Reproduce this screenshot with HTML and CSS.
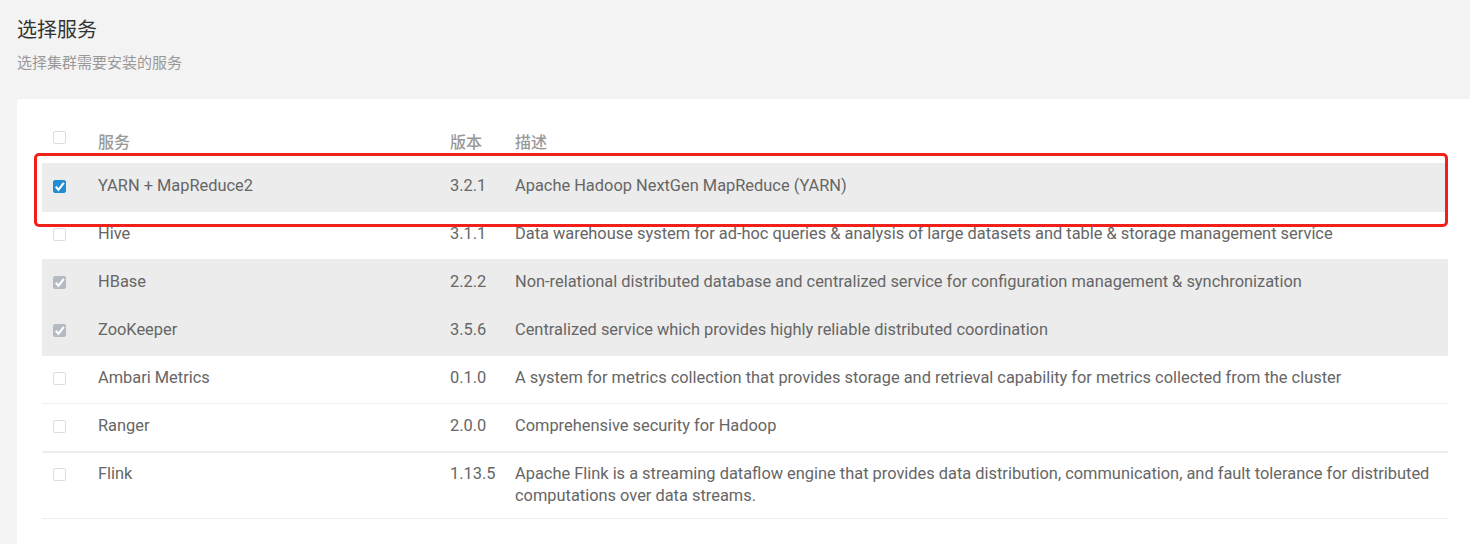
FILE: index.html
```html
<!DOCTYPE html>
<html lang="zh">
<head>
<meta charset="utf-8">
<link rel="stylesheet" href="styles.css">
</head>
<body>
<div class="page">
  <h1 class="title">选择服务</h1>
  <p class="subtitle">选择集群需要安装的服务</p>
  <div class="card">
    <table class="svc">
      <thead>
        <tr>
          <th class="c-check"><span class="cb"></span></th>
          <th class="c-name">服务</th>
          <th class="c-ver">版本</th>
          <th class="c-desc">描述</th>
        </tr>
      </thead>
      <tbody>
        <tr class="sel">
          <td class="c-check"><span class="cb on"><svg viewBox="0 0 13 13"><path d="M2.8 6.6 L5.4 9.8 L10.8 2.8" fill="none" stroke="#fff" stroke-width="2.2"/></svg></span></td>
          <td>YARN + MapReduce2</td><td>3.2.1</td><td>Apache Hadoop NextGen MapReduce (YARN)</td>
        </tr>
        <tr>
          <td class="c-check"><span class="cb"></span></td>
          <td>Hive</td><td>3.1.1</td><td>Data warehouse system for ad-hoc queries &amp; analysis of large datasets and table &amp; storage management service</td>
        </tr>
        <tr class="sel">
          <td class="c-check"><span class="cb dis"><svg viewBox="0 0 13 13"><path d="M2.8 6.6 L5.4 9.8 L10.8 2.8" fill="none" stroke="#fff" stroke-width="2.2"/></svg></span></td>
          <td>HBase</td><td>2.2.2</td><td>Non-relational distributed database and centralized service for configuration management &amp; synchronization</td>
        </tr>
        <tr class="sel">
          <td class="c-check"><span class="cb dis"><svg viewBox="0 0 13 13"><path d="M2.8 6.6 L5.4 9.8 L10.8 2.8" fill="none" stroke="#fff" stroke-width="2.2"/></svg></span></td>
          <td>ZooKeeper</td><td>3.5.6</td><td>Centralized service which provides highly reliable distributed coordination</td>
        </tr>
        <tr>
          <td class="c-check"><span class="cb"></span></td>
          <td>Ambari Metrics</td><td>0.1.0</td><td>A system for metrics collection that provides storage and retrieval capability for metrics collected from the cluster</td>
        </tr>
        <tr>
          <td class="c-check"><span class="cb"></span></td>
          <td>Ranger</td><td>2.0.0</td><td>Comprehensive security for Hadoop</td>
        </tr>
        <tr class="thick">
          <td class="c-check"><span class="cb"></span></td>
          <td>Flink</td><td>1.13.5</td><td>Apache Flink is a streaming dataflow engine that provides data distribution, communication, and fault tolerance for distributed computations over data streams.</td>
        </tr>
      </tbody>
    </table>
  </div>
  <div class="highlight"></div>
</div>
</body>
</html>
```
FILE: styles.css
```css
* { box-sizing: border-box; }
html, body { margin: 0; padding: 0; }
body {
  background: #f3f3f3;
  font-family: Roboto, "Noto Sans CJK SC", sans-serif;
  color: #666;
  width: 1470px;
  height: 544px;
  overflow: hidden;
}
.page {
  position: relative;
  padding: 16px 0 0 17px;
}
.title {
  margin: 0;
  font-size: 20px;
  font-weight: 400;
  line-height: 28px;
  color: #333;
}
.subtitle {
  margin: 9px 0 0;
  font-size: 15px;
  line-height: 20px;
  color: #999;
}
.card {
  margin-top: 26px;
  background: #fff;
  border-radius: 4px 0 0 0;
  padding: 20px 22px 30px 25px;
}
.svc {
  width: 100%;
  border-collapse: collapse;
  font-size: 16.4px;
}
.svc th {
  text-align: left;
  font-weight: 500;
  font-size: 16px;
  color: #999;
  height: 44px;
  padding: 0;
  vertical-align: middle;
}
.svc td {
  padding: 11px 0 14px;
  line-height: 22px;
  vertical-align: top;
  border-top: 1px solid #eee;
}
.svc tr.thick td { border-top: 2px solid #eee; }
.svc tbody tr:last-child td { border-bottom: 1px solid #eee; padding-top: 10px; padding-bottom: 11px; }
.svc tr.sel td { background: #ececec; border-top-color: #ececec; }
.c-check { width: 56px; padding-left: 11px !important; }
.svc td:nth-child(2), .c-name { width: 352px; }
.svc td:nth-child(3), .c-ver { width: 65px; }
.cb {
  display: block;
  width: 13px;
  height: 13px;
  border: 1px solid #ddd;
  border-radius: 2px;
  background: #fff;
  margin-top: 5px;
}
.svc th .cb { margin-top: -6px; }
.cb svg { display: block; width: 13px; height: 13px; margin: -1px 0 0 -1px; }
.cb.on { background: #1f8fd1; border-color: #1f8fd1; }
.cb.dis { background: #b4bac1; border-color: #b4bac1; }
.highlight {
  position: absolute;
  left: 34px;
  top: 153px;
  width: 1414px;
  height: 74px;
  border: 3px solid #f0201a;
  border-radius: 5px;
  pointer-events: none;
}
```
